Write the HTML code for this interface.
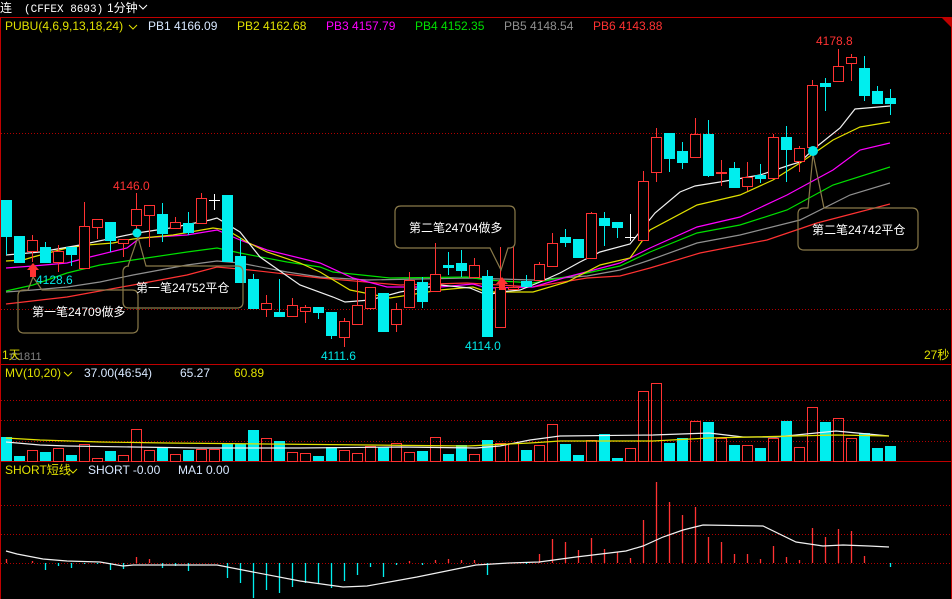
<!DOCTYPE html>
<html><head><meta charset="utf-8"><style>
html,body{margin:0;padding:0;background:#000;width:952px;height:599px;overflow:hidden}
svg{display:block}
text{font-family:"Liberation Sans","Noto Sans CJK SC",sans-serif;font-size:12px}
</style></head><body>
<svg id="s" width="952" height="599" xmlns="http://www.w3.org/2000/svg">
<rect width="952" height="599" fill="#000"/>
<text x="0" y="12" fill="#fff">连</text>
<text x="24" y="12" fill="#fff" style="font-family:'Liberation Mono',monospace;font-size:11px">(CFFEX 8693)</text>
<text x="107" y="12" fill="#fff">1分钟</text>
<path d="M139 5 L143 9 L147 5" stroke="#fff" fill="none"/>
<line x1="0" y1="17.5" x2="952" y2="17.5" stroke="#c00000"/>
<line x1="0.5" y1="17" x2="0.5" y2="599" stroke="#c00000"/>
<line x1="951.5" y1="17" x2="951.5" y2="599" stroke="#c00000"/>
<path d="M942 18 L951 18 L951 27 Z" fill="#c00000"/>
<line x1="0" y1="364.5" x2="952" y2="364.5" stroke="#c00000"/>
<line x1="0" y1="461.5" x2="952" y2="461.5" stroke="#c00000"/>
<g stroke="#b00000" stroke-dasharray="1,2">
<line x1="1" y1="133.5" x2="951" y2="133.5"/>
<line x1="1" y1="309.5" x2="951" y2="309.5"/>
<line x1="1" y1="400.5" x2="951" y2="400.5"/>
<line x1="1" y1="420.5" x2="951" y2="420.5"/>
<line x1="1" y1="441.5" x2="951" y2="441.5"/>
<line x1="1" y1="505.5" x2="951" y2="505.5"/>
<line x1="1" y1="534.5" x2="951" y2="534.5"/>
<line x1="1" y1="563.5" x2="951" y2="563.5"/>
</g>
<text x="5" y="30" fill="#e0e000">PUBU(4,6,9,13,18,24)</text>
<path d="M129 25 L133 29 L137 25" stroke="#e0e000" fill="none"/>
<text x="148" y="30" fill="#d8e8ff">PB1 4166.09</text>
<text x="237" y="30" fill="#e0e000">PB2 4162.68</text>
<text x="326" y="30" fill="#ff00ff">PB3 4157.79</text>
<text x="415" y="30" fill="#00e000">PB4 4152.35</text>
<text x="504" y="30" fill="#909090">PB5 4148.54</text>
<text x="593" y="30" fill="#ff3232">PB6 4143.88</text>
<text x="5" y="377" fill="#e0e000">MV(10,20)</text>
<path d="M64 372 L68 376 L72 372" stroke="#e0e000" fill="none"/>
<text x="84" y="377" fill="#d8e8ff">37.00(46:54)</text>
<text x="180" y="377" fill="#d8e8ff">65.27</text>
<text x="234" y="377" fill="#e0e000">60.89</text>
<text x="5" y="474" fill="#e0e000">SHORT短线</text>
<path d="M69 469 L73 473 L77 469" stroke="#e0e000" fill="none"/>
<text x="88" y="474" fill="#d8e8ff">SHORT -0.00</text>
<text x="178" y="474" fill="#d8e8ff">MA1 0.00</text>
<text x="2" y="359" fill="#e0e000">1天</text>
<text x="10" y="360" fill="#808080" style="font-size:11px">C1811</text>
<text x="924" y="359" fill="#e0e000">27秒</text>
<g id="g"></g>
<text x="113" y="190" fill="#ff3232">4146.0</text>
<text x="36" y="284" fill="#00e8e8">4128.6</text>
<text x="321" y="360" fill="#00e8e8">4111.6</text>
<text x="465" y="350" fill="#00e8e8">4114.0</text>
<text x="816" y="45" fill="#ff3232">4178.8</text>
<g fill="none" stroke="#8a7a4a" stroke-width="1.2">
<path d="M28 290 H24 Q18 290 18 296 V327 Q18 333 24 333 H132 Q138 333 138 327 V296 Q138 290 132 290 H42 L33 277 Z"/>
<path d="M128 266 H129 Q123 266 123 272 V302 Q123 308 129 308 H237 Q243 308 243 302 V272 Q243 266 237 266 H146 L138 237 Z"/>
<path d="M490 248 H401 Q395 248 395 242 V212 Q395 206 401 206 H509 Q515 206 515 212 V242 Q515 248 509 248 H508 L501 270 Z"/>
<path d="M808 208 H804 Q798 208 798 214 V244 Q798 250 804 250 H912 Q918 250 918 244 V214 Q918 208 912 208 H824 L813 154 Z"/>
</g>
<text x="32" y="316" fill="#fff">第一笔24709做多</text>
<text x="136" y="292" fill="#fff">第一笔24752平仓</text>
<text x="409" y="232" fill="#fff">第二笔24704做多</text>
<text x="812" y="234" fill="#fff">第二笔24742平仓</text>
<circle cx="137" cy="233" r="4.5" fill="#00e8e8"/>
<circle cx="813" cy="151" r="5" fill="#00e8e8"/>
<path d="M33 263 L39 270 L36 270 L36 277 L30 277 L30 270 L27 270 Z" fill="#ff3232"/>
<path d="M502 277 L508 284 L505 284 L505 290 L499 290 L499 284 L496 284 Z" fill="#ff3232"/>
</svg>
<script>
var C=[
['d',200,237,200,255],['d',236,263,236,263],['u',240,251,235,262],['d',247,263,242,263],['u',251,262,245,272],
['d',247,255,247,266],['u',226,268,202,268],['u',219,227,219,239],['d',222,241,222,252],['u',239,243,239,257],
['u',209,225,193,232],['u',205,215,205,247],['d',214,234,203,242],['u',222,228,217,228],['d',223,233,212,235],
['u',198,223,193,223],['w',200,200,194,210],['d',195,262,195,262],['d',256,283,238,283],['d',279,309,274,309],
['u',303,309,295,317],['d',312,317,279,317],['u',305,316,298,316],['u',307,311,305,323],['d',307,313,307,319],
['d',312,336,312,339],['u',321,337,318,347],['u',305,324,280,324],['u',287,308,287,310],['d',293,332,293,332],
['u',309,324,303,332],['u',280,307,272,307],['d',282,302,277,308],['u',274,291,243,291],['d',265,268,252,275],
['d',263,271,250,277],['u',265,277,258,277],['d',276,337,270,337],['u',287,327,247,327],['u',287,289,247,289],
['d',281,287,275,287],['u',264,280,262,280],['u',243,266,233,266],['d',237,243,229,247],['d',239,258,239,258],
['u',213,258,212,258],['d',218,226,212,246],['d',222,228,222,238],['w',237,237,214,241],['u',181,240,171,240],
['u',137,172,128,182],['d',133,159,133,172],['d',151,163,142,169],['u',134,157,118,157],['d',134,176,120,177],
['u',172,173,160,186],['d',168,188,162,188],['u',177,186,162,191],['d',175,179,164,183],['u',137,178,134,178],
['d',137,150,126,182],['u',148,161,146,172],['u',85,147,80,147],['d',83,87,78,111],['u',66,81,49,81],
['u',57,63,54,81],['d',68,96,56,101],['d',91,104,86,104],['d',98,104,89,115]];
var V=[437,456,450,452,448,455,444,458,451,455,429,450,447,454,450,449,449,444,444,430,438,441,452,453,456,447,450,453,446,447,443,452,451,437,454,445,454,440,443,443,450,445,424,444,455,440,434,458,448,391,383,443,438,421,422,438,445,445,448,438,421,447,407,422,418,438,433,448,446];
var S=[559,563,561,570,566,568,564,564,570,569,557,559,568,566,571,563,563,578,583,598,590,593,587,583,583,588,581,575,567,577,565,561,565,560,559,560,560,575,563,563,564,554,539,542,550,538,549,552,558,520,482,502,515,507,537,542,554,554,559,546,557,560,528,537,529,531,556,563,567];
var R='#ff3232',Cy='#00eeee',h='';
function pl(p,c){return '<polyline fill="none" stroke="'+c+'" stroke-width="1.2" points="'+p+'"/>';}
h+=pl('6,304 67,297 133,285 187,275 217,267 250,270 320,278 400,285 467,283 533,287 587,278 620,276 650,268 700,253 767,240 817,223 890,204',R);
h+=pl('6,292 33,290 67,287 100,282 133,275 187,265 217,261 240,263 287,272 320,277 367,280 467,278 533,280 587,276 620,270 650,260 697,243 740,235 800,220 850,195 890,183','#909090');
h+=pl('6,291 33,285 67,273 100,265 133,260 187,252 217,248 240,253 287,262 320,267 333,272 390,278 467,277 487,280 533,283 587,273 620,266 650,252 697,233 740,225 787,210 833,185 890,167','#00e000');
h+=pl('6,268 33,266 67,263 90,257 127,248 140,238 187,235 217,230 240,240 267,250 320,263 353,278 387,287 440,287 473,284 487,288 533,287 567,277 620,263 650,248 697,227 740,217 787,195 833,170 860,150 890,143','#ff00ff');
h+=pl('6,261 23,260 33,257 67,248 87,245 113,243 133,239 173,235 213,228 227,230 247,242 267,252 300,263 320,272 350,290 390,298 440,290 473,287 487,292 533,292 567,282 600,265 630,258 650,230 697,205 740,195 773,180 800,163 833,140 860,127 890,122','#e0e000');
h+=pl('6,255 40,252 80,245 137,233 170,228 210,220 217,218 240,232 260,257 300,285 333,297 345,302 370,300 400,292 440,285 470,288 487,295 500,292 520,290 540,282 560,273 580,262 600,252 630,244 655,213 680,192 695,186 720,182 760,175 790,165 800,162 815,148 840,128 855,109 890,106','#f0f0f0');
for(var i=0;i<C.length;i++){var c=C[i],x=1+13*i,cx=x+5.5,col=c[0]=='d'?Cy:(c[0]=='w'?'#fff':R);
 h+='<line x1="'+cx+'" y1="'+c[3]+'" x2="'+cx+'" y2="'+c[4]+'" stroke="'+col+'"/>';
 if(c[0]=='d')h+='<rect x="'+x+'" y="'+c[1]+'" width="11" height="'+Math.max(1,c[2]-c[1])+'" fill="'+Cy+'"/>';
 else if(c[0]=='w')h+='<line x1="'+x+'" y1="'+(c[1]+.5)+'" x2="'+(x+11)+'" y2="'+(c[1]+.5)+'" stroke="#fff"/>';
 else h+='<rect x="'+(x+.5)+'" y="'+(c[1]+.5)+'" width="10" height="'+Math.max(1,c[2]-c[1])+'" fill="#000" stroke="'+R+'"/>';
 if(c[0]=='d')h+='<rect x="'+x+'" y="'+V[i]+'" width="11" height="'+(461-V[i])+'" fill="'+Cy+'"/>';
 else h+='<rect x="'+(x+.5)+'" y="'+(V[i]+.5)+'" width="10" height="'+(461-V[i])+'" fill="none" stroke="'+R+'"/>';
 if(S[i]!=563)h+='<line x1="'+cx+'" y1="563" x2="'+cx+'" y2="'+S[i]+'" stroke="'+(S[i]<563?R:Cy)+'" stroke-width="1.3"/>';
}
h+=pl('6,442 40,445 67,446 133,447 200,448 300,448 400,447 476,448 500,446 530,440 560,436 653,435 709,433 743,437 776,437 836,431 889,436','#f0f0f0');
h+=pl('6,438 40,440 100,442 167,443 267,444 467,446 530,443 560,441 653,441 709,438 836,435 889,436','#e0e000');
h+=pl('6,551 17,554 43,559 67,561 100,562 123,566 133,565 217,565 253,572 300,581 343,587 367,586 417,577 476,565 509,563 539,562 576,557 626,551 643,546 663,537 683,530 703,525 763,526 796,542 823,546 843,545 869,546 889,547','#f0f0f0');
var g=document.getElementById('g');g.innerHTML=h;
</script>
</body></html>
